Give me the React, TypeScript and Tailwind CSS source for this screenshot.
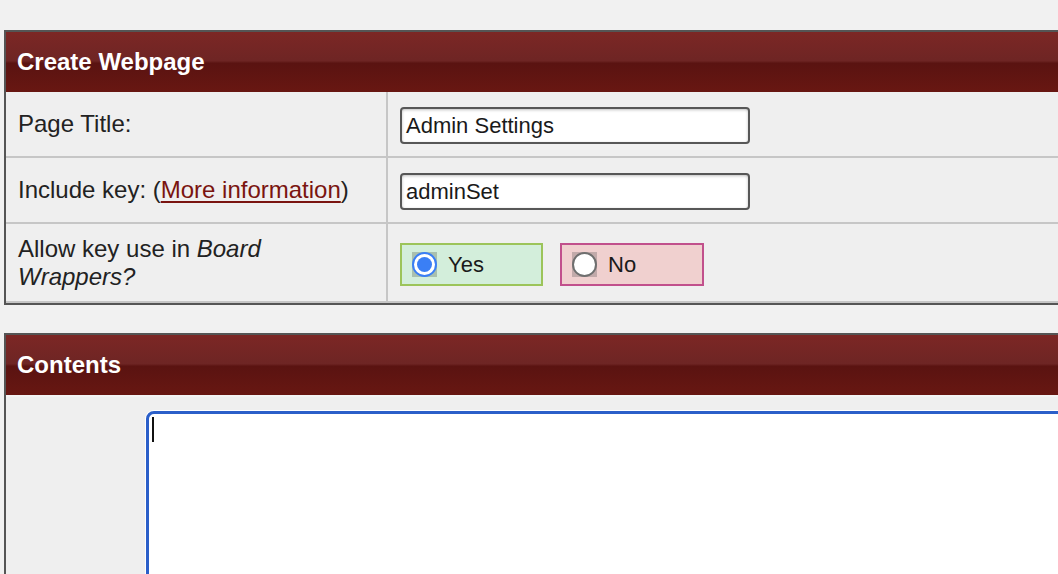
import React from 'react';

const header =
  'flex h-[60px] items-center bg-[linear-gradient(to_bottom,#7c2725_0%,#6e2524_48%,#5a1311_52%,#681712_100%)] pl-[11px] text-[24px] font-bold text-white';

function Radio({ checked }: { checked: boolean }) {
  return (
    <span className={checked ? 'flex h-[25px] w-[25px] items-center justify-center bg-[#a9c0ae]' : 'flex h-[25px] w-[25px] items-center justify-center bg-[#c2aaaa]'}>
      {checked ? (
        <span className="flex h-[25px] w-[25px] items-center justify-center rounded-full border-2 border-[#3a7ff5] bg-white">
          <span className="h-[15px] w-[15px] rounded-full bg-[#3a7ff5]" />
        </span>
      ) : (
        <span className="h-[25px] w-[25px] rounded-full border-2 border-[#6f6f6f] bg-white" />
      )}
    </span>
  );
}

function Row({
  label,
  children,
  height,
}: {
  label: React.ReactNode;
  children: React.ReactNode;
  height: string;
}) {
  return (
    <div className={`flex border-b-2 border-[#c6c6c6] ${height}`}>
      <div className="flex w-[382px] shrink-0 items-center border-r-2 border-[#c6c6c6] pl-[12px] pr-[12px] text-[24px] leading-[28px] text-[#222]">
        <div>{label}</div>
      </div>
      <div className="flex flex-1 items-center pl-[12px]">{children}</div>
    </div>
  );
}

function TextInput({ value }: { value: string }) {
  return (
    <div className="mt-[3px] flex h-[37px] w-[350px] items-center rounded-[4px] border-2 border-[#575757] bg-white pl-[4px] text-[22px] text-[#1a1a1a] shadow-[inset_0_1px_3px_rgba(0,0,0,0.25)]">
      {value}
    </div>
  );
}

export default function App() {
  return (
    <div
      className="h-[574px] w-[1058px] overflow-hidden bg-[#f1f1f1] pl-[4px] pt-[30px]"
      style={{ fontFamily: '"Liberation Sans", Arial, Helvetica, sans-serif' }}
    >
      <div className="w-[1100px] border-2 border-[#555]">
        <div className={header}>Create Webpage</div>
        <div className="bg-[#efefef]">
          <Row label="Page Title:" height="h-[66px]">
            <TextInput value="Admin Settings" />
          </Row>
          <Row
            label={
              <>
                Include key: (
                <a href="#" className="text-[#7a1410] underline decoration-[1.5px] underline-offset-[3px]">
                  More information
                </a>
                )
              </>
            }
            height="h-[66px]"
          >
            <TextInput value="adminSet" />
          </Row>
          <Row
            label={
              <>
                Allow key use in <i>Board Wrappers?</i>
              </>
            }
            height="h-[79px]"
          >
            <div className="flex gap-[17px] pt-[3px]">
              <label className="flex h-[43px] w-[143px] items-center gap-[11px] border-2 border-[#9cc45a] bg-[#d3eedb] pl-[10px] text-[22px] text-[#1a1a1a]">
                <Radio checked />
                Yes
              </label>
              <label className="flex h-[43px] w-[144px] items-center gap-[11px] border-2 border-[#c1508c] bg-[#f0d0cf] pl-[10px] text-[22px] text-[#1a1a1a]">
                <Radio checked={false} />
                No
              </label>
            </div>
          </Row>
        </div>
      </div>

      <div className="mt-[28px] w-[1100px] border-2 border-b-0 border-[#555]">
        <div className={header}>Contents</div>
        <div className="h-[200px] border-t-2 border-[#f4f4f4] bg-[#efefef] pl-[140px] pt-[14px]">
          <div className="h-[300px] rounded-tl-[8px] border-[3px] border-[#2b5fc9] bg-white pl-[3px] pt-[3px] shadow-[0_0_0_1px_#ffffff]">
            <span className="block h-[25px] w-[2px] bg-[#111]" />
          </div>
        </div>
      </div>
    </div>
  );
}
